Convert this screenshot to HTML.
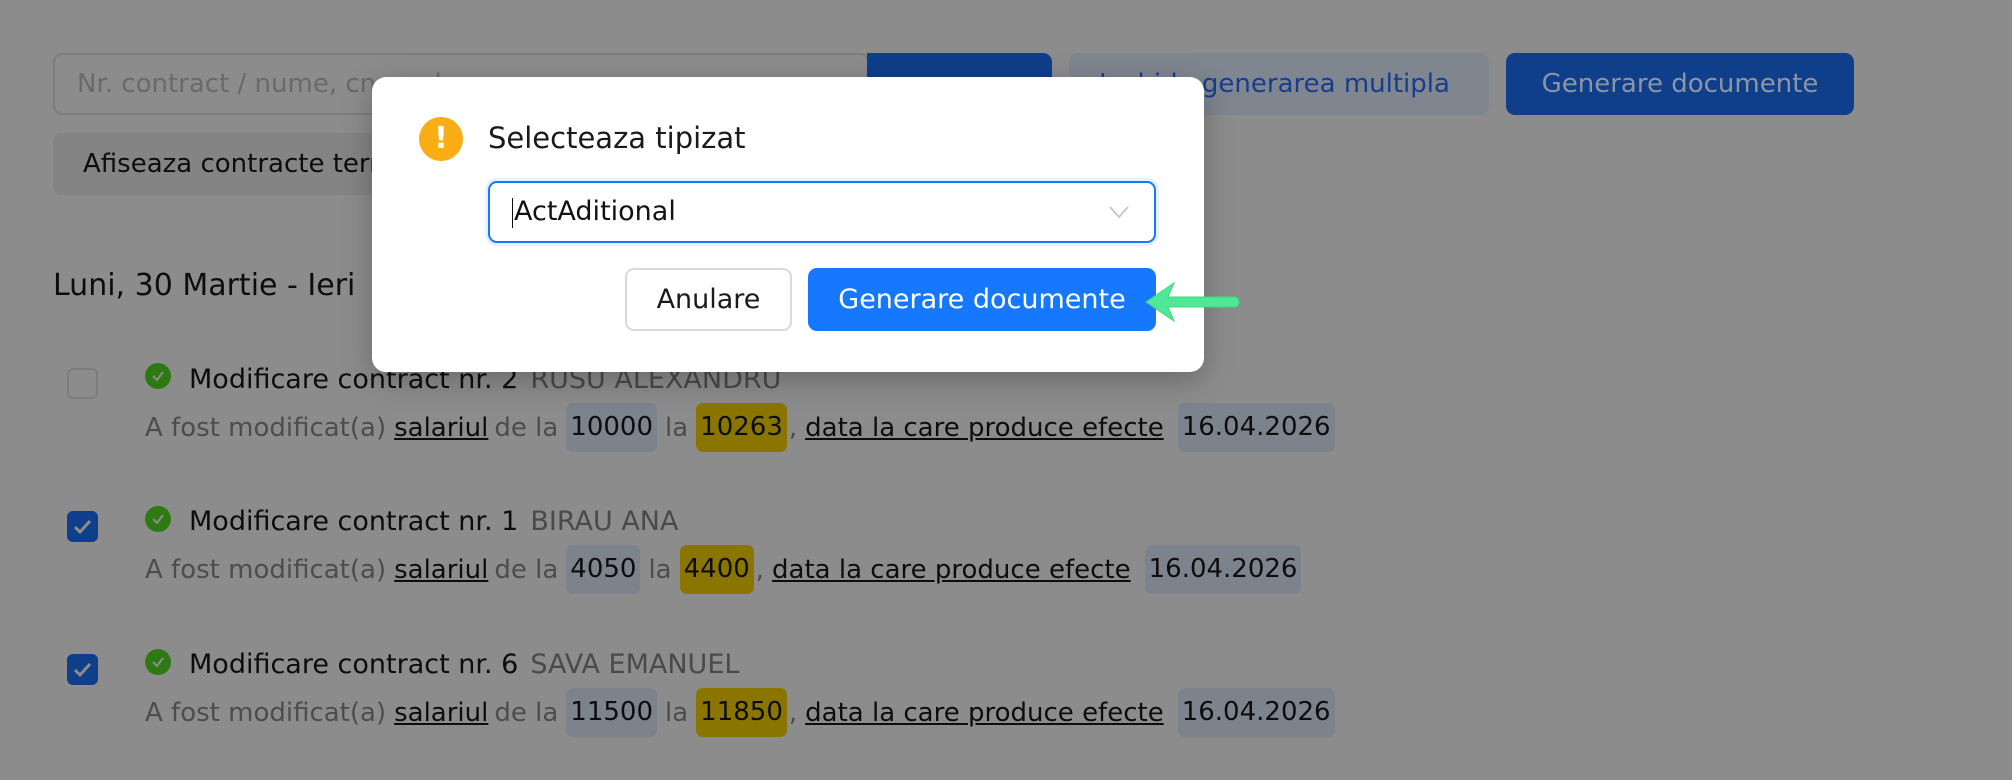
<!DOCTYPE html>
<html><head><meta charset="utf-8"><style>
*{box-sizing:border-box;margin:0;padding:0}
body{width:2012px;height:780px;background:#8c8c8c;font-family:"DejaVu Sans","Liberation Sans",sans-serif;position:relative;overflow:hidden}
.abs{position:absolute}
.search{left:53px;top:53px;width:816px;height:62px;border:2px solid #7d7d7d;border-radius:9px;font-size:26px;color:#6a6a6a;padding:14px 22px;white-space:nowrap;overflow:hidden}
.sbtn{left:867px;top:53px;width:185px;height:62px;background:#0f3e8a;border-radius:0 9px 9px 0}
.lbtn{left:1069px;top:53px;width:420px;height:62px;background:#7f8690;border-radius:9px;color:#173d8c;font-size:26px;line-height:62px;padding-left:30px;white-space:nowrap}
.gbtn{left:1506px;top:53px;width:348px;height:62px;background:#0f3e8a;border-radius:9px;color:#8c95a3;font-size:26px;line-height:62px;text-align:center;white-space:nowrap}
.abtn{left:53px;top:133px;width:360px;height:62px;background:#848484;border-radius:9px;color:#0d0d0d;font-size:26px;line-height:62px;padding-left:30px;white-space:nowrap;overflow:hidden}
.day{left:53px;top:268px;font-size:30px;color:#0d0d0d}
.cb{left:67px;width:31px;height:31px;border-radius:6px}
.cb.off{border:2px solid #7d7d7d}
.cb.on{background:#0f3e8a}
.ok{left:145px;width:26px;height:26px;border-radius:50%;background:#2e7a12}
.title{left:189px;font-size:27px;color:#0d0d0d;white-space:nowrap}
.title span{color:#4a4a4a;margin-left:12px}
.line{left:145px;font-size:26px;color:#4d4d4d;display:flex;align-items:center;white-space:nowrap;height:49px}
.line u{color:#0d0d0d;text-decoration:underline;margin:0 6px 0 8px}
.pill{background:#7c838c;color:#0d0d0d;border-radius:7px;padding:0 4px;height:49px;line-height:49px;margin:0 8px}
.pill.y{background:#8a7500;margin:0 2px 0 8px}
.modal{left:372px;top:77px;width:832px;height:295px;background:#fff;border-radius:14px;box-shadow:0 8px 30px rgba(0,0,0,.25)}
.warn{left:419px;top:117px;width:44px;height:44px;border-radius:50%;background:#faad14;color:#fff;font-size:30px;text-align:center;line-height:44px;font-weight:bold}
.mt{left:488px;top:121px;font-size:29px;color:#1a1a1a}
.sel{left:488px;top:181px;width:668px;height:62px;border:2px solid #1677ff;border-radius:9px;box-shadow:0 0 0 3px #e6f0ff;font-size:27px;color:#111;padding:13px 22px}
.caret{display:inline-block;width:1px;height:30px;background:#111;vertical-align:middle;margin-right:1px}
.an{left:625px;top:268px;width:167px;height:63px;border:2px solid #d9d9d9;border-radius:9px;font-size:27px;color:#1a1a1a;text-align:center;line-height:59px;background:#fff}
.gd{left:808px;top:268px;width:348px;height:63px;background:#1677ff;border-radius:9px;font-size:27px;color:#fff;text-align:center;line-height:63px;white-space:nowrap}
</style></head><body>
<div class="abs search">Nr. contract / nume, cnp, adresa</div>
<div class="abs sbtn"></div>
<div class="abs lbtn">Inchide generarea multipla</div>
<div class="abs gbtn">Generare documente</div>
<div class="abs abtn">Afiseaza contracte terminate</div>
<div class="abs day">Luni, 30 Martie - Ieri</div>

<div class="abs cb off" style="top:368px"></div>
<svg class="abs ok" style="top:363px" viewBox="0 0 26 26"><path d="M8 13 L12 17 L18 9" fill="none" stroke="#8c8c8c" stroke-width="2"/></svg>
<div class="abs title" style="top:364px">Modificare contract nr. 2<span>RUSU ALEXANDRU</span></div>
<div class="abs line" style="top:403px">A fost modificat(a)<u>salariul</u>de la<span class="pill">10000</span>la<span class="pill y">10263</span>,<u>data la care produce efecte</u><span class="pill">16.04.2026</span></div>

<svg class="abs cb on" style="top:511px" viewBox="0 0 31 31"><path d="M8 16 L13 21 L23 10" fill="none" stroke="#8c8c8c" stroke-width="3"/></svg>
<svg class="abs ok" style="top:506px" viewBox="0 0 26 26"><path d="M8 13 L12 17 L18 9" fill="none" stroke="#8c8c8c" stroke-width="2"/></svg>
<div class="abs title" style="top:506px">Modificare contract nr. 1<span>BIRAU ANA</span></div>
<div class="abs line" style="top:545px">A fost modificat(a)<u>salariul</u>de la<span class="pill">4050</span>la<span class="pill y">4400</span>,<u>data la care produce efecte</u><span class="pill">16.04.2026</span></div>

<svg class="abs cb on" style="top:654px" viewBox="0 0 31 31"><path d="M8 16 L13 21 L23 10" fill="none" stroke="#8c8c8c" stroke-width="3"/></svg>
<svg class="abs ok" style="top:649px" viewBox="0 0 26 26"><path d="M8 13 L12 17 L18 9" fill="none" stroke="#8c8c8c" stroke-width="2"/></svg>
<div class="abs title" style="top:649px">Modificare contract nr. 6<span>SAVA EMANUEL</span></div>
<div class="abs line" style="top:688px">A fost modificat(a)<u>salariul</u>de la<span class="pill">11500</span>la<span class="pill y">11850</span>,<u>data la care produce efecte</u><span class="pill">16.04.2026</span></div>

<div class="abs modal"></div>
<div class="abs warn">!</div>
<div class="abs mt">Selecteaza tipizat</div>
<div class="abs sel"><span class="caret"></span>ActAditional
<svg class="abs" style="left:618px;top:22px" width="22" height="14" viewBox="0 0 22 14"><path d="M2 2 L11 12 L20 2" fill="none" stroke="#bfbfbf" stroke-width="1.6"/></svg></div>
<div class="abs an">Anulare</div>
<div class="abs gd">Generare documente</div>
<svg class="abs" style="left:1140px;top:278px" width="110" height="50" viewBox="0 0 110 50"><path d="M6 24 L34 5 L28 19 L94 19 Q99 19 99 24 Q99 29 94 29 L28 29 L34 43 Z" fill="#4ee896" stroke="#3fd67f" stroke-width="1"/></svg>
</body></html>
